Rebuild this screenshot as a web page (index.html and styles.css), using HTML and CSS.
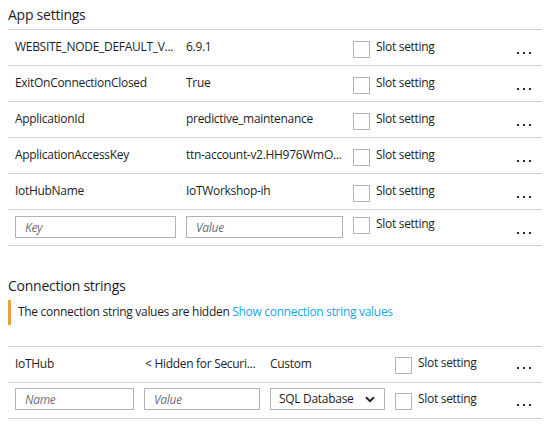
FILE: index.html
```html
<!DOCTYPE html>
<html>
<head>
<meta charset="utf-8">
<link rel="stylesheet" href="styles.css">
</head>
<body>
<div class="page">
  <section class="section">
    <h2 class="heading heading--app">App settings</h2>
    <div class="table">
      <div class="row">
        <div class="cell app-key">WEBSITE_NODE_DEFAULT_V...</div>
        <div class="cell app-val">6.9.1</div>
        <div class="cell slot app-slot"><span class="cb"></span><span>Slot setting</span></div>
        <div class="dots"><i></i><i></i><i></i></div>
      </div>
      <div class="row">
        <div class="cell app-key">ExitOnConnectionClosed</div>
        <div class="cell app-val">True</div>
        <div class="cell slot app-slot"><span class="cb"></span><span>Slot setting</span></div>
        <div class="dots"><i></i><i></i><i></i></div>
      </div>
      <div class="row">
        <div class="cell app-key">ApplicationId</div>
        <div class="cell app-val">predictive_maintenance</div>
        <div class="cell slot app-slot"><span class="cb"></span><span>Slot setting</span></div>
        <div class="dots"><i></i><i></i><i></i></div>
      </div>
      <div class="row">
        <div class="cell app-key">ApplicationAccessKey</div>
        <div class="cell app-val">ttn-account-v2.HH976WmO...</div>
        <div class="cell slot app-slot"><span class="cb"></span><span>Slot setting</span></div>
        <div class="dots"><i></i><i></i><i></i></div>
      </div>
      <div class="row">
        <div class="cell app-key">IotHubName</div>
        <div class="cell app-val">IoTWorkshop-ih</div>
        <div class="cell slot app-slot"><span class="cb"></span><span>Slot setting</span></div>
        <div class="dots"><i></i><i></i><i></i></div>
      </div>
      <div class="row row--input">
        <div class="cell app-key"><input class="field field--key" placeholder="Key"></div>
        <div class="cell app-val"><input class="field field--value" placeholder="Value"></div>
        <div class="cell slot app-slot"><span class="cb"></span><span>Slot setting</span></div>
        <div class="dots"><i></i><i></i><i></i></div>
      </div>
    </div>
  </section>

  <section class="section section--conn">
    <h2 class="heading">Connection strings</h2>
    <div class="notice">The connection string values are hidden <a class="link" href="#">Show connection string values</a></div>
    <div class="table table--conn">
      <div class="row row--conn">
        <div class="cell conn-name">IoTHub</div>
        <div class="cell conn-val">&lt; Hidden for Securi...</div>
        <div class="cell conn-type">Custom</div>
        <div class="cell slot conn-slot"><span class="cb"></span><span>Slot setting</span></div>
        <div class="dots"><i></i><i></i><i></i></div>
      </div>
      <div class="row row--conn row--conn-input">
        <div class="cell conn-name"><input class="field field--name" placeholder="Name"></div>
        <div class="cell conn-val"><input class="field field--cvalue" placeholder="Value"></div>
        <div class="cell conn-type">
          <div class="select"><span>SQL Database</span>
            <svg class="chev" width="10" height="7" viewBox="0 0 10 7"><polyline points="1,1.2 5,5.2 9,1.2" fill="none" stroke="#222" stroke-width="2"/></svg>
          </div>
        </div>
        <div class="cell slot conn-slot"><span class="cb"></span><span>Slot setting</span></div>
        <div class="dots"><i></i><i></i><i></i></div>
      </div>
    </div>
  </section>
</div>
</body>
</html>
```

FILE: styles.css
```css
* { box-sizing: border-box; }
html, body { margin: 0; padding: 0; background: #fff; }
body {
  font-family: "Open Sans", "Noto Sans", sans-serif;
  font-size: 12px;
  letter-spacing: -0.3px;
  color: #1e1e1e;
}
.page {
  width: 546px;
  padding-left: 8px;
}
.section { width: 534px; }
.heading {
  margin: 0;
  font-size: 14px;
  font-weight: 400;
  line-height: 20px;
  letter-spacing: -0.25px;
}
.heading--app {
  padding-top: 5px;
  height: 30px;
  border-bottom: 1px solid #cfcfcf;
}
.row {
  display: flex;
  align-items: flex-start;
  height: 36px;
  border-bottom: 1px solid #cfcfcf;
  padding-left: 7px;
  line-height: 16px;
  white-space: nowrap;
}
.cell { padding-top: 9px; }
.app-key { width: 171px; }
.app-val { width: 167px; }
.app-slot { width: 164px; }
.slot {
  display: flex;
  align-items: flex-start;
  gap: 6px;
}
.cb {
  display: block;
  width: 17px;
  height: 17px;
  border: 1px solid #b5b5b5;
  background: #fff;
  margin-top: 2px;
}
.slot .cb + span { display: block; }
.dots {
  display: flex;
  gap: 4px;
  padding-top: 22px;
}
.dots i {
  display: block;
  width: 2px;
  height: 2px;
  background: #2a2a2a;
}
.row--input .cell { padding-top: 6px; }
.row--input .slot { padding-top: 6px; }
.row--input .cb { margin-top: 1px; }
.field {
  display: block;
  height: 22px;
  border: 1px solid #b3b3b3;
  padding: 0 0 0 9px;
  font-family: inherit;
  font-size: 12px;
  letter-spacing: -0.3px;
  color: #1e1e1e;
  outline: none;
  background: #fff;
}
.field::placeholder { color: #6f6f78; font-style: italic; }
.field--key { width: 161px; }
.field--value { width: 157px; }

.section--conn { margin-top: 30px; }
.section--conn .heading { padding-top: 0; }
.notice {
  margin-top: 4px;
  height: 25px;
  border-left: 3px solid #e8a13c;
  padding: 4px 0 0 7px;
  line-height: 16px;
}
.link { color: #14a7ea; text-decoration: none; }
.table--conn {
  margin-top: 21px;
  border-top: 1px solid #cfcfcf;
}
.row--conn { height: 36px; }
.row--conn .cell { padding-top: 9px; }
.conn-name { width: 130px; }
.conn-val { width: 125px; }
.conn-type { width: 125px; }
.conn-slot { width: 122px; }
.row--conn .slot { padding-top: 8px; }
.row--conn .cb { margin-top: 2px; }
.row--conn .dots { padding-top: 20px; }
.row--conn-input .cell { padding-top: 5px; }
.row--conn-input .slot { padding-top: 8px; }
.row--conn-input .dots { padding-top: 21px; }
.field--name { width: 119px; }
.field--cvalue { width: 116px; margin-left: -1px; }
.select {
  display: flex;
  align-items: center;
  justify-content: space-between;
  width: 115px;
  height: 22px;
  border: 1px solid #b3b3b3;
  padding: 0 9px 0 8px;
}
.chev { display: block; }
```
